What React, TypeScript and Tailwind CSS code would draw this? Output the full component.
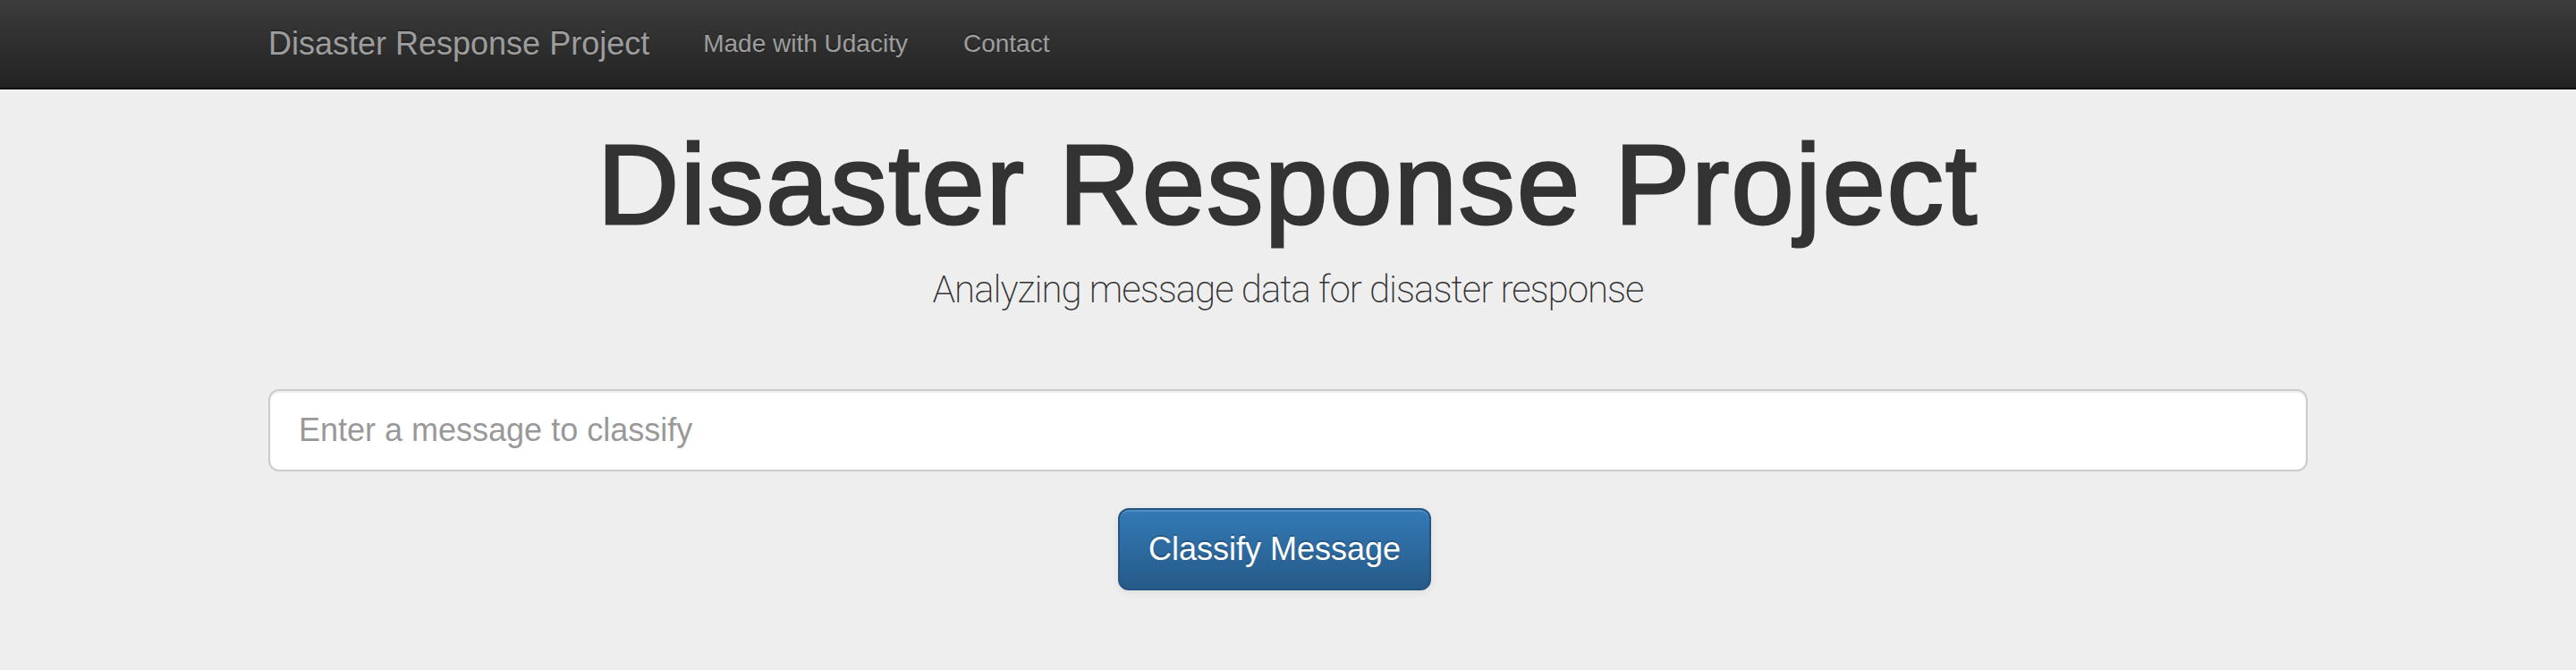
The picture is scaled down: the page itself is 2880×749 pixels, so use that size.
import React from "react";

export default function App() {
  return (
    <div
      className="min-h-[749px] w-full bg-[#eeeeee] text-[#333333]"
      style={{ fontFamily: '"Liberation Sans", Arial, Helvetica, sans-serif' }}
    >
      <nav className="h-[100px] w-full border-b-2 border-[#080808] bg-gradient-to-b from-[#3c3c3c] to-[#222222]">
        <div className="mx-auto flex w-[2340px] px-[30px]">
          <a className="-ml-[30px] block px-[30px] pt-[29px] text-[36px] leading-[40px] text-[#9d9d9d] [text-shadow:0_-2px_0_rgba(0,0,0,0.25)]">
            Disaster Response Project
          </a>
          <ul className="flex">
            <li>
              <a className="block px-[30px] pt-[29px] text-[28px] leading-[40px] text-[#9d9d9d] [text-shadow:0_-2px_0_rgba(0,0,0,0.25)]">
                Made with Udacity
              </a>
            </li>
            <li>
              <a className="block pl-[32px] pr-[30px] pt-[29px] text-[28px] leading-[40px] text-[#9d9d9d] [text-shadow:0_-2px_0_rgba(0,0,0,0.25)]">
                Contact
              </a>
            </li>
          </ul>
        </div>
      </nav>

      <main className="mx-auto w-[2340px] px-[30px]">
        <h1 className="mt-[38px] mb-[17px] text-center text-[126px] leading-[1.1] font-normal tracking-[2.1px] text-[#333333] [-webkit-text-stroke:3px_#333333]">
          Disaster Response Project
        </h1>
        <p
          className="text-center text-[42px] leading-[60px] font-extralight tracking-[-1px] text-[#333333]"
          style={{ fontFamily: 'Roboto, "Liberation Sans", sans-serif' }}
        >
          Analyzing message data for disaster response
        </p>

        <div className="mt-[81px]">
          <input
            type="text"
            placeholder="Enter a message to classify"
            className="block h-[92px] w-full rounded-[12px] border-2 border-[#cccccc] bg-white px-[32px] text-[36px] text-[#555555] shadow-[inset_0_2px_2px_rgba(0,0,0,0.075)] outline-none placeholder:text-[#999999]"
          />
        </div>

        <div className="mt-[41px] flex justify-center">
          <button
            type="button"
            className="mr-[30px] h-[92px] w-[350px] rounded-[12px] border-2 border-[#245580] bg-gradient-to-b from-[#337ab7] to-[#265a88] text-[36px] leading-[48px] text-white shadow-[inset_0_2px_0_rgba(255,255,255,0.15),0_2px_10px_rgba(0,0,0,0.075)] [text-shadow:0_-2px_0_rgba(0,0,0,0.2)]"
          >
            Classify Message
          </button>
        </div>
      </main>
    </div>
  );
}
